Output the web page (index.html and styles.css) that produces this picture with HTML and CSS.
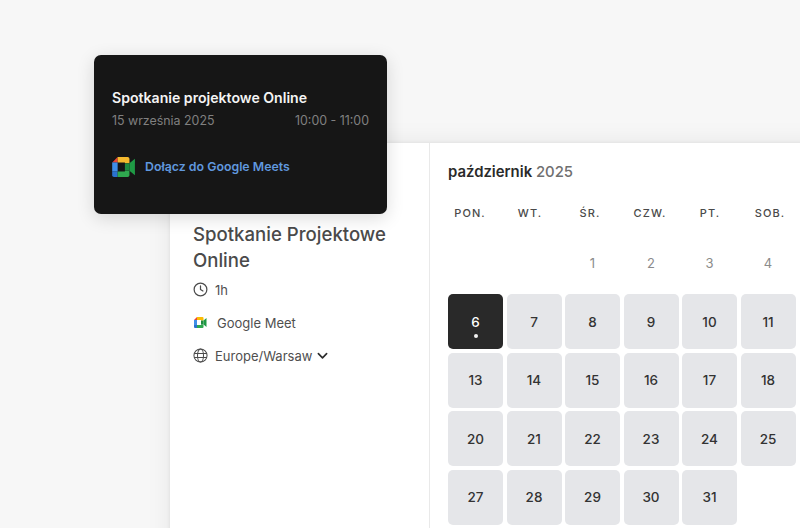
FILE: index.html
```html
<!DOCTYPE html>
<html lang="pl">
<head>
<meta charset="utf-8">
<title>Spotkanie</title>
<link rel="stylesheet" href="styles.css">
</head>
<body>
<main class="stage">
  <section class="card">
    <aside class="info">
      <h1 class="title">Spotkanie Projektowe Online</h1>
      <div class="meta">
        <svg class="icon" viewBox="0 0 16 16" fill="none" stroke="#4b4b4b" stroke-width="1.3"><circle cx="8" cy="8" r="6.8"/><path d="M8 4.2V8l2.6 1.6" stroke-linecap="round" stroke-linejoin="round"/></svg>
        <span>1h</span>
      </div>
      <div class="meta meet">
        <svg class="icon-meet" viewBox="0 0 26 22"><path d="M0 6 6 0v6z" fill="#ea4335"/><path d="M6 0h11a2 2 0 0 1 2 2v5h-5V6H6z" fill="#fbbc04"/><path d="M0 6h6v10H0z" fill="#3f8ee8"/><path d="M0 16h6v6H2a2 2 0 0 1-2-2z" fill="#2a72d0"/><path d="M6 16h8v-1h5v5a2 2 0 0 1-2 2H6z" fill="#2fa84f"/><path d="M14 7h5v8h-5z" fill="#1f8a40"/><path d="m19 7 6-5v18l-6-5z" fill="#1f9a45"/></svg>
        <span>Google Meet</span>
      </div>
      <div class="meta">
        <svg class="icon" viewBox="0 0 16 16" fill="none" stroke="#4b4b4b" stroke-width="1.1"><circle cx="8" cy="8" r="7"/><ellipse cx="8" cy="8" rx="3.2" ry="7"/><path d="M1.2 5.8h13.6M1.2 10.2h13.6"/></svg>
        <span>Europe/Warsaw</span>
        <svg class="chev" viewBox="0 0 12 8" fill="none" stroke="#2c2c2c" stroke-width="1.8"><path d="m1.5 1.5 4.5 4.5 4.5-4.5" stroke-linecap="round" stroke-linejoin="round"/></svg>
      </div>
    </aside>
    <div class="calendar">
      <h2 class="month">październik <span class="year">2025</span></h2>
      <div class="weekdays">
        <span>PON.</span><span>WT.</span><span>ŚR.</span><span>CZW.</span><span>PT.</span><span>SOB.</span>
      </div>
      <div class="days first">
        <span class="day"></span><span class="day"></span>
        <span class="day off">1</span><span class="day off">2</span><span class="day off">3</span><span class="day off">4</span>
      </div>
      <div class="days">
        <span class="day open today">6</span><span class="day open">7</span><span class="day open">8</span><span class="day open">9</span><span class="day open">10</span><span class="day open">11</span>
        <span class="day open">13</span><span class="day open">14</span><span class="day open">15</span><span class="day open">16</span><span class="day open">17</span><span class="day open">18</span>
        <span class="day open">20</span><span class="day open">21</span><span class="day open">22</span><span class="day open">23</span><span class="day open">24</span><span class="day open">25</span>
        <span class="day open">27</span><span class="day open">28</span><span class="day open">29</span><span class="day open">30</span><span class="day open">31</span>
      </div>
    </div>
  </section>
  <article class="popover">
    <h3 class="pop-title">Spotkanie projektowe Online</h3>
    <div class="pop-when"><span>15 września 2025</span><span>10:00 - 11:00</span></div>
    <a class="pop-link">
      <svg class="pop-meet" viewBox="0 0 26 22"><path d="M0 6 6 0v6z" fill="#ea4335"/><path d="M6 0h11a2 2 0 0 1 2 2v5h-5V6H6z" fill="#f5b92e"/><path d="M0 6h6v10H0z" fill="#3f8ee8"/><path d="M0 16h6v6H2a2 2 0 0 1-2-2z" fill="#2a72d0"/><path d="M6 16h8v-1h5v5a2 2 0 0 1-2 2H6z" fill="#2fa84f"/><path d="M14 7h5v8h-5z" fill="#1f8a40"/><path d="m19 7 6-5v18l-6-5z" fill="#1f9a45"/></svg>
      <span>Dołącz do Google Meets</span>
    </a>
  </article>
</main>
</body>
</html>
```
FILE: styles.css
```css
* { box-sizing: border-box; }
html, body { margin: 0; height: 100%; }
body {
  background: #f7f7f7;
  font-family: Inter, "Liberation Sans", sans-serif;
  overflow: hidden;
}
.stage {
  position: relative;
  width: 800px;
  height: 528px;
  overflow: hidden;
  padding: 143px 0 0 170px;
}
.card {
  display: flex;
  width: 660px;
  height: 420px;
  background: #fff;
  box-shadow: 0 0 4px rgba(0, 0, 0, 0.08), 0 0 24px rgba(0, 0, 0, 0.07);
}
.info {
  width: 260px;
  flex: none;
  border-right: 1px solid #e9e9e9;
  padding: 78px 20px 0 23px;
}
.title {
  margin: 0;
  font-size: 18.6px;
  font-weight: 500;
  line-height: 26px;
  color: #4a4a4a;
}
.meta {
  display: flex;
  align-items: center;
  gap: 7px;
  height: 33px;
  font-size: 13px;
  color: #4f4f4f;
}
.meta.meet { gap: 10px; }
.icon { width: 15px; height: 15px; flex: none; }
.icon-meet { width: 13px; height: 11px; flex: none; margin-left: 1px; }
.chev { width: 11px; height: 8px; margin-left: -2px; }
.calendar {
  flex: 1;
  padding: 20px 0 0 18px;
}
.month {
  margin: 0;
  font-size: 14.9px;
  line-height: 18px;
  font-weight: 600;
  color: #2a2a2a;
}
.year { font-weight: 500; color: #6f6f6f; }
.weekdays {
  display: grid;
  grid-template-columns: repeat(6, 60px);
  margin: 24px 0 0 -8px;
  font-size: 11px;
  line-height: 16px;
  font-weight: 500;
  letter-spacing: 1.1px;
  color: #4a4a4a;
  text-align: center;
}
.days {
  display: grid;
  grid-template-columns: repeat(6, 55px);
  grid-auto-rows: 55px;
  gap: 3.5px;
  margin-top: 10px;
}
.days.first { margin-top: 23px; grid-auto-rows: 40px; }
.day {
  display: flex;
  align-items: center;
  justify-content: center;
  font-size: 13.5px;
  font-weight: 500;
  color: #333;
  border-radius: 5px;
}
.day.off { color: #8b8b8b; font-weight: 400; font-size: 13px; align-items: flex-start; padding-top: 9px; line-height: 20px; }
.day.open { background: #e5e6e9; }
.day.today {
  position: relative;
  background: #292929;
  color: #fff;
}
.day.today::after {
  content: "";
  position: absolute;
  left: 25.5px;
  top: 40px;
  width: 4px;
  height: 4px;
  border-radius: 50%;
  background: #f2f2f2;
}
.popover {
  position: absolute;
  left: 94px;
  top: 55px;
  width: 293px;
  height: 159px;
  padding: 34px 18px 0 18px;
  background: #161616;
  border-radius: 7px;
  box-shadow: 0 4px 18px rgba(0, 0, 0, 0.14);
}
.pop-title {
  margin: 0;
  font-size: 14.1px;
  line-height: 18px;
  font-weight: 600;
  color: #f4f4f4;
}
.pop-when {
  display: flex;
  justify-content: space-between;
  margin-top: 5px;
  font-size: 12.4px;
  line-height: 18px;
  color: #808080;
}
.pop-link {
  display: flex;
  align-items: center;
  gap: 9px;
  margin-top: 27px;
  font-size: 12.35px;
  line-height: 20px;
  font-weight: 600;
  color: #6098de;
}
.pop-meet { width: 24px; height: 20px; flex: none; }
```
